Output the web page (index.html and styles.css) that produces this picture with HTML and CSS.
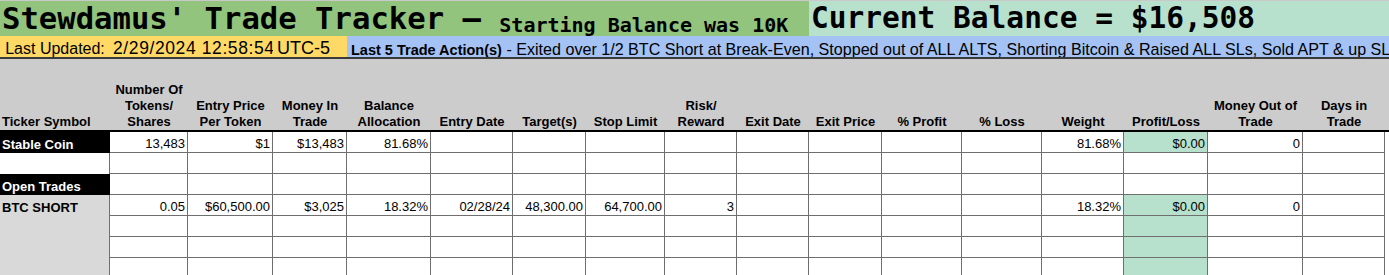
FILE: index.html
```html
<!DOCTYPE html>
<html lang="en">
<head>
<meta charset="utf-8">
<title>Stewdamus' Trade Tracker</title>
<link rel="stylesheet" href="styles.css">
</head>
<body>
<div class="band band-title">
  <div class="title-cell"><span class="title">Stewdamus' Trade Tracker – </span><span class="subtitle">Starting Balance was 10K</span></div>
  <div class="balance-cell">Current Balance = $16,508</div>
</div>
<div class="band band-status">
  <div class="status-cell upd-label">Last Updated:</div>
  <div class="status-cell upd-date">2/29/2024 12:58:54</div>
  <div class="status-cell upd-tz">UTC-5</div>
  <div class="status-cell actions"><b>Last 5 Trade Action(s)</b>&nbsp;- Exited over 1/2 BTC Short at Break-Even, Stopped out of ALL ALTS, Shorting Bitcoin &amp; Raised ALL SLs, Sold APT &amp; up SL</div>
</div>
<div class="sheet">
  <div class="h h-left">Ticker Symbol</div>
  <div class="h">Number Of<br>Tokens/<br>Shares</div>
  <div class="h">Entry Price<br>Per Token</div>
  <div class="h">Money In<br>Trade</div>
  <div class="h">Balance<br>Allocation</div>
  <div class="h">Entry Date</div>
  <div class="h">Target(s)</div>
  <div class="h">Stop Limit</div>
  <div class="h">Risk/<br>Reward</div>
  <div class="h">Exit Date</div>
  <div class="h">Exit Price</div>
  <div class="h">% Profit</div>
  <div class="h">% Loss</div>
  <div class="h">Weight</div>
  <div class="h">Profit/Loss</div>
  <div class="h">Money Out of<br>Trade</div>
  <div class="h">Days in<br>Trade</div>
  <div class="h"></div>

  <div class="c t t-black">Stable Coin</div>
  <div class="c">13,483</div>
  <div class="c">$1</div>
  <div class="c">$13,483</div>
  <div class="c">81.68%</div>
  <div class="c"></div>
  <div class="c"></div>
  <div class="c"></div>
  <div class="c"></div>
  <div class="c"></div>
  <div class="c"></div>
  <div class="c"></div>
  <div class="c"></div>
  <div class="c">81.68%</div>
  <div class="c pl">$0.00</div>
  <div class="c">0</div>
  <div class="c"></div>
  <div class="f"></div>

  <div class="c t"></div>
  <div class="c"></div><div class="c"></div><div class="c"></div><div class="c"></div>
  <div class="c"></div><div class="c"></div><div class="c"></div><div class="c"></div>
  <div class="c"></div><div class="c"></div><div class="c"></div><div class="c"></div>
  <div class="c"></div><div class="c"></div><div class="c"></div><div class="c"></div>
  <div class="f"></div>

  <div class="c t t-black">Open Trades</div>
  <div class="c"></div><div class="c"></div><div class="c"></div><div class="c"></div>
  <div class="c"></div><div class="c"></div><div class="c"></div><div class="c"></div>
  <div class="c"></div><div class="c"></div><div class="c"></div><div class="c"></div>
  <div class="c"></div><div class="c"></div><div class="c"></div><div class="c"></div>
  <div class="f"></div>

  <div class="c t t-gray">BTC SHORT</div>
  <div class="c">0.05</div>
  <div class="c">$60,500.00</div>
  <div class="c">$3,025</div>
  <div class="c">18.32%</div>
  <div class="c">02/28/24</div>
  <div class="c">48,300.00</div>
  <div class="c">64,700.00</div>
  <div class="c">3</div>
  <div class="c"></div>
  <div class="c"></div>
  <div class="c"></div>
  <div class="c"></div>
  <div class="c">18.32%</div>
  <div class="c pl">$0.00</div>
  <div class="c">0</div>
  <div class="c"></div>
  <div class="f"></div>

  <div class="c t t-gray"></div>
  <div class="c"></div><div class="c"></div><div class="c"></div><div class="c"></div>
  <div class="c"></div><div class="c"></div><div class="c"></div><div class="c"></div>
  <div class="c"></div><div class="c"></div><div class="c"></div><div class="c"></div>
  <div class="c"></div><div class="c pl"></div><div class="c"></div><div class="c"></div>
  <div class="f"></div>

  <div class="c t t-gray"></div>
  <div class="c"></div><div class="c"></div><div class="c"></div><div class="c"></div>
  <div class="c"></div><div class="c"></div><div class="c"></div><div class="c"></div>
  <div class="c"></div><div class="c"></div><div class="c"></div><div class="c"></div>
  <div class="c"></div><div class="c pl"></div><div class="c"></div><div class="c"></div>
  <div class="f"></div>

  <div class="c t t-gray"></div>
  <div class="c"></div><div class="c"></div><div class="c"></div><div class="c"></div>
  <div class="c"></div><div class="c"></div><div class="c"></div><div class="c"></div>
  <div class="c"></div><div class="c"></div><div class="c"></div><div class="c"></div>
  <div class="c"></div><div class="c pl"></div><div class="c"></div><div class="c"></div>
  <div class="f"></div>
</div>
</body>
</html>
```

FILE: styles.css
```css
* {
  box-sizing: border-box;
  margin: 0;
  padding: 0;
}

html, body {
  background: #ffffff;
}

body {
  width: 1389px;
  height: 275px;
  overflow: hidden;
  font-family: "Liberation Sans", Arial, sans-serif;
  color: #000000;
}

.band {
  display: flex;
}

.band-title {
  height: 36px;
  border-top: 1px solid #c9c9c9;
}

.title-cell,
.balance-cell {
  display: flex;
  align-items: flex-end;
  font-family: "DejaVu Sans Mono", "Liberation Mono", monospace;
  font-weight: bold;
  line-height: 1;
  white-space: nowrap;
  padding-bottom: 1px;
}

.title-cell {
  width: 809px;
  background: #93c47d;
  padding-left: 2px;
}

.title {
  font-size: 30.6px;
  white-space: pre;
}

.subtitle {
  font-size: 20px;
}

.balance-cell {
  flex: 1;
  background: #b7e1cd;
  font-size: 29.5px;
  padding-left: 2px;
  padding-bottom: 3px;
}

.band-status {
  height: 23px;
  border-bottom: 2px solid #3a3a3a;
}

.status-cell {
  display: flex;
  align-items: flex-end;
  line-height: 1;
  white-space: nowrap;
}

.upd-label {
  width: 110px;
  justify-content: center;
  background: #ffd966;
  font-size: 16px;
}

.upd-date {
  width: 163px;
  background: #ffd966;
  font-size: 17.5px;
  letter-spacing: 0.6px;
  padding-left: 3px;
}

.upd-tz {
  width: 74px;
  background: #ffd966;
  font-size: 18px;
  padding-left: 4px;
}

.actions {
  flex: 1;
  background: #a4c2f4;
  font-size: 16.1px;
  padding-left: 4px;
  overflow: hidden;
}

.actions b {
  font-size: 14.5px;
}

.sheet {
  display: grid;
  grid-template-columns: 110px 78px 85px 74px 84px 82px 73px 79px 72px 72px 73px 80px 80px 82px 84px 95px 82px 1fr;
  grid-template-rows: 73px;
  grid-auto-rows: 21px;
  font-size: 13px;
}

.h {
  background: #cccccc;
  border-bottom: 2px solid #000000;
  font-weight: bold;
  line-height: 16px;
  display: flex;
  align-items: flex-end;
  justify-content: center;
  text-align: center;
  white-space: nowrap;
}

.h-left {
  justify-content: flex-start;
  text-align: left;
  padding-left: 2px;
}

.c {
  border-right: 1px solid #6f6f6f;
  border-bottom: 1px solid #6f6f6f;
  display: flex;
  align-items: flex-end;
  justify-content: flex-end;
  padding: 0 2px;
  line-height: 16px;
  white-space: nowrap;
}

.t {
  border-bottom: none;
  justify-content: flex-start;
  font-weight: bold;
}

.t-black {
  background: #000000;
  color: #ffffff;
  border-right-color: #000000;
}

.t-gray {
  background: #d9d9d9;
}

.pl {
  background: #b7e1cd;
}

.f {
  background: #ffffff;
}
```
